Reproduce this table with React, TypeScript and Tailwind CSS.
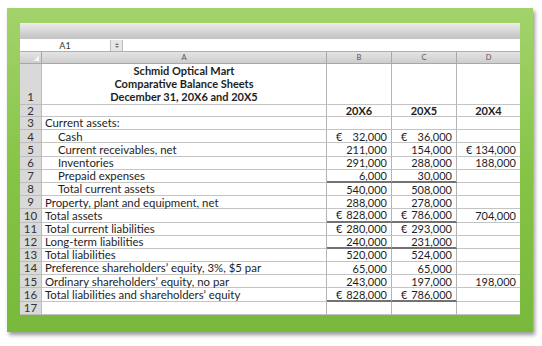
import React from "react";

type Row = {
  n: number;
  label: string;
  indent?: boolean;
  b?: [boolean, string];
  c?: [boolean, string];
  d?: [boolean, string];
  thick?: boolean;
};

const rows: Row[] = [
  { n: 3, label: "Current assets:" },
  { n: 4, label: "Cash", indent: true, b: [true, "32,000"], c: [true, "36,000"] },
  { n: 5, label: "Current receivables, net", indent: true, b: [false, "211,000"], c: [false, "154,000"], d: [true, "134,000"] },
  { n: 6, label: "Inventories", indent: true, b: [false, "291,000"], c: [false, "288,000"], d: [false, "188,000"] },
  { n: 7, label: "Prepaid expenses", indent: true, b: [false, "6,000"], c: [false, "30,000"], thick: true },
  { n: 8, label: "Total current assets", indent: true, b: [false, "540,000"], c: [false, "508,000"] },
  { n: 9, label: "Property, plant and equipment, net", b: [false, "288,000"], c: [false, "278,000"] },
  { n: 10, label: "Total assets", b: [true, "828,000"], c: [true, "786,000"], d: [false, "704,000"], thick: true },
  { n: 11, label: "Total current liabilities", b: [true, "280,000"], c: [true, "293,000"] },
  { n: 12, label: "Long-term liabilities", b: [false, "240,000"], c: [false, "231,000"], thick: true },
  { n: 13, label: "Total liabilities", b: [false, "520,000"], c: [false, "524,000"] },
  { n: 14, label: "Preference shareholders\u2019 equity, 3%, $5 par", b: [false, "65,000"], c: [false, "65,000"] },
  { n: 15, label: "Ordinary shareholders\u2019 equity, no par", b: [false, "243,000"], c: [false, "197,000"], d: [false, "198,000"] },
  { n: 16, label: "Total liabilities and shareholders\u2019 equity", b: [true, "828,000"], c: [true, "786,000"], thick: true },
  { n: 17, label: "" },
];

function Val({ v, w, thick }: { v?: [boolean, string]; w: string; thick?: boolean }) {
  return (
    <div
      className={`${w} h-full flex items-center justify-between pl-[9px] pr-[4px] border-r border-[#b4b4b4] ${
        thick ? "border-b-2 border-b-[#727272]" : "border-b border-b-[#c4c4c4]"
      }`}
    >
      <span>{v && v[0] ? "\u20ac" : ""}</span>
      <span>{v ? v[1] : ""}</span>
    </div>
  );
}

export default function App() {
  return (
    <div className="w-[542px] h-[346px] bg-white font-['Lato','Open_Sans',sans-serif] text-[#1e1e1e] overflow-hidden">
      <div className="ml-[7px] mt-[8px] w-[526px] h-[324px] pt-[15px] pl-[13px] pr-[13px] pb-[17px] bg-gradient-to-b from-[#a3d36c] via-[#86c446] to-[#78b83a] shadow-[2px_3px_4px_rgba(0,0,0,0.4)]">
        <div className="w-[500px] h-full bg-white flex flex-col">
          {/* toolbar */}
          <div className="h-[17px] bg-gradient-to-b from-[#ececec] to-[#c2c2c2] border-b border-white" />
          {/* name box row */}
          <div className="h-[12px] flex bg-white border-b border-[#b0b0b0]">
            <div className="w-[90px] h-full flex items-center justify-center text-[9px] text-[#333] leading-none">A1</div>
            <div className="w-[13px] h-full bg-[#e6e6e6] border-x border-[#bdbdbd] flex flex-col items-center justify-center gap-[1px]">
              <div className="w-0 h-0 border-l-[2px] border-r-[2px] border-b-[2px] border-l-transparent border-r-transparent border-b-[#777]" />
              <div className="w-0 h-0 border-l-[2px] border-r-[2px] border-t-[2px] border-l-transparent border-r-transparent border-t-[#777]" />
            </div>
            <div className="flex-1" />
          </div>
          {/* column header */}
          <div className="h-[12px] flex bg-gradient-to-b from-[#e4e4e4] to-[#cdcdcd] border-b border-[#a8a8a8] text-[7.5px] text-[#555] leading-none">
            <div className="w-[22px] h-full border-r border-[#a8a8a8] relative">
              <div className="absolute right-[2px] bottom-[2px] w-[6px] h-[6px] bg-gradient-to-tl from-white to-transparent [clip-path:polygon(100%_0,100%_100%,0_100%)]" />
            </div>
            <div className="w-[285px] h-full border-r border-[#a8a8a8] flex items-center justify-center">A</div>
            <div className="w-[65px] h-full border-r border-[#a8a8a8] flex items-center justify-center">B</div>
            <div className="w-[65px] h-full border-r border-[#a8a8a8] flex items-center justify-center">C</div>
            <div className="w-[63px] h-full flex items-center justify-center">D</div>
          </div>
          {/* row 1 */}
          <div className="h-[41px] flex text-[11px] leading-[13px]">
            <div className="w-[22px] h-full bg-[#d9d9d9] border-r border-b border-[#bcbcbc] flex items-end justify-center pb-[1px] text-[11.5px] text-[#333]">1</div>
            <div className="w-[285px] h-full border-r border-b border-[#c4c4c4] border-r-[#b4b4b4] flex flex-col items-center justify-end pb-[1px] font-bold">
              <div>Schmid Optical Mart</div>
              <div>Comparative Balance Sheets</div>
              <div>December 31, 20X6 and 20X5</div>
            </div>
            <div className="w-[65px] h-full border-r border-b border-[#c4c4c4] border-r-[#b4b4b4]" />
            <div className="w-[65px] h-full border-r border-b border-[#c4c4c4] border-r-[#b4b4b4]" />
            <div className="w-[63px] h-full border-b border-[#c4c4c4]" />
          </div>
          {/* row 2 */}
          <div className="h-[12px] flex text-[11px] leading-none">
            <div className="w-[22px] h-full bg-[#d9d9d9] border-r border-b border-[#bcbcbc] flex items-center justify-center text-[11.5px] text-[#333]">2</div>
            <div className="w-[285px] h-full border-r border-b border-[#c4c4c4] border-r-[#b4b4b4]" />
            <div className="w-[65px] h-full border-r border-b border-[#c4c4c4] border-r-[#b4b4b4] flex items-center justify-center font-bold">20X6</div>
            <div className="w-[65px] h-full border-r border-b border-[#c4c4c4] border-r-[#b4b4b4] flex items-center justify-center font-bold">20X5</div>
            <div className="w-[63px] h-full border-b border-[#c4c4c4] flex items-center justify-center font-bold">20X4</div>
          </div>
          {rows.map((r) => (
            <div key={r.n} className="h-[13.2px] flex text-[11px] leading-none">
              <div className="w-[22px] h-full bg-[#d9d9d9] border-r border-b border-[#bcbcbc] flex items-center justify-center text-[11.5px] text-[#333]">
                {r.n}
              </div>
              <div
                className={`w-[285px] h-full border-r border-b border-[#c4c4c4] border-r-[#b4b4b4] flex items-center text-[11.4px] ${
                  r.indent ? "pl-[16px]" : "pl-[3px]"
                }`}
              >
                {r.label}
              </div>
              <Val v={r.b} w="w-[65px]" thick={r.thick} />
              <Val v={r.c} w="w-[65px]" thick={r.thick} />
              <div className="w-[63px] h-full flex items-center justify-between pl-[9px] pr-[4px] border-b border-[#c4c4c4]">
                <span>{r.d && r.d[0] ? "\u20ac" : ""}</span>
                <span>{r.d ? r.d[1] : ""}</span>
              </div>
            </div>
          ))}
        </div>
      </div>
    </div>
  );
}
